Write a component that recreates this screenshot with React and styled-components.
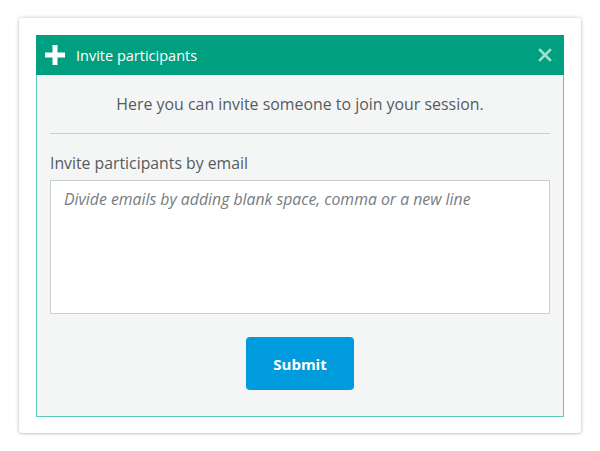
import React from "react";
import styled, { createGlobalStyle } from "styled-components";

const GlobalStyle = createGlobalStyle`
  body {
    margin: 0;
    background: #ffffff;
    font-family: "Open Sans", "Noto Sans", sans-serif;
  }
`;

const Page = styled.div`
  padding: 18px 19px;
`;

const Card = styled.div`
  width: 562px;
  height: 415px;
  box-sizing: border-box;
  padding: 17px 17px 16px 17px;
  background: #ffffff;
  border-radius: 3px;
  box-shadow: 0 0 4px rgba(0, 0, 0, 0.22), 0 1px 2px rgba(0, 0, 0, 0.1);
`;

const Dialog = styled.div`
  height: 100%;
  box-sizing: border-box;
  display: flex;
  flex-direction: column;
  border: 1px solid #5fc6bb;
  background: #f4f6f6;
`;

const Header = styled.div`
  height: 40px;
  flex-shrink: 0;
  margin: -1px -1px 0 -1px;
  display: flex;
  align-items: center;
  padding: 0 12px 0 9px;
  background: #009f7f;
  color: #ffffff;
`;

const Title = styled.span`
  flex: 1;
  margin-left: 11px;
  font-size: 14.5px;
`;

const CloseButton = styled.button`
  border: none;
  background: none;
  padding: 0;
  display: flex;
  cursor: pointer;
`;

const Body = styled.div`
  flex: 1;
  display: flex;
  flex-direction: column;
  padding: 0 13px;
`;

const Intro = styled.p`
  margin: 18px 0 0 0;
  text-align: center;
  font-size: 15.9px;
  line-height: 22px;
  color: #555b5e;
  padding-bottom: 18px;
  border-bottom: 1px solid #c9cdce;
`;

const Label = styled.label`
  margin-top: 18px;
  font-size: 15.8px;
  line-height: 22px;
  color: #555b5e;
`;

const EmailArea = styled.textarea`
  margin-top: 6px;
  height: 134px;
  flex-shrink: 0;
  box-sizing: border-box;
  resize: none;
  padding: 7px 13px;
  border: 1px solid #c8cdd0;
  background: #ffffff;
  font-family: "Open Sans", "Noto Sans", sans-serif;
  font-size: 15.8px;
  color: #444;
  &::placeholder {
    font-style: italic;
    color: #777d80;
  }
`;

const Actions = styled.div`
  display: flex;
  justify-content: center;
  margin-top: 23px;
`;

const SubmitButton = styled.button`
  width: 108px;
  height: 53px;
  border: none;
  border-radius: 4px;
  background: #009bdc;
  color: #ffffff;
  font-family: "Open Sans", "Noto Sans", sans-serif;
  font-weight: 700;
  font-size: 15px;
  cursor: pointer;
`;

const PlusIcon = () => (
  <svg width="20" height="20" viewBox="0 0 20 20">
    <rect x="7.5" y="0" width="5" height="20" fill="#ffffff" />
    <rect x="0" y="7.5" width="20" height="5" fill="#ffffff" />
  </svg>
);

const CloseIcon = () => (
  <svg width="14" height="14" viewBox="0 0 14 14">
    <path
      d="M2 2 L12 12 M12 2 L2 12"
      stroke="#9fe0d0"
      strokeWidth="2.6"
      strokeLinecap="square"
    />
  </svg>
);

const App = () => {
  return (
    <Page>
      <GlobalStyle />
      <Card>
        <Dialog>
          <Header>
            <PlusIcon />
            <Title>Invite participants</Title>
            <CloseButton aria-label="close">
              <CloseIcon />
            </CloseButton>
          </Header>
          <Body>
            <Intro>Here you can invite someone to join your session.</Intro>
            <Label htmlFor="emails">Invite participants by email</Label>
            <EmailArea
              id="emails"
              placeholder="Divide emails by adding blank space, comma or a new line"
            />
            <Actions>
              <SubmitButton type="submit">Submit</SubmitButton>
            </Actions>
          </Body>
        </Dialog>
      </Card>
    </Page>
  );
};

export default App;
